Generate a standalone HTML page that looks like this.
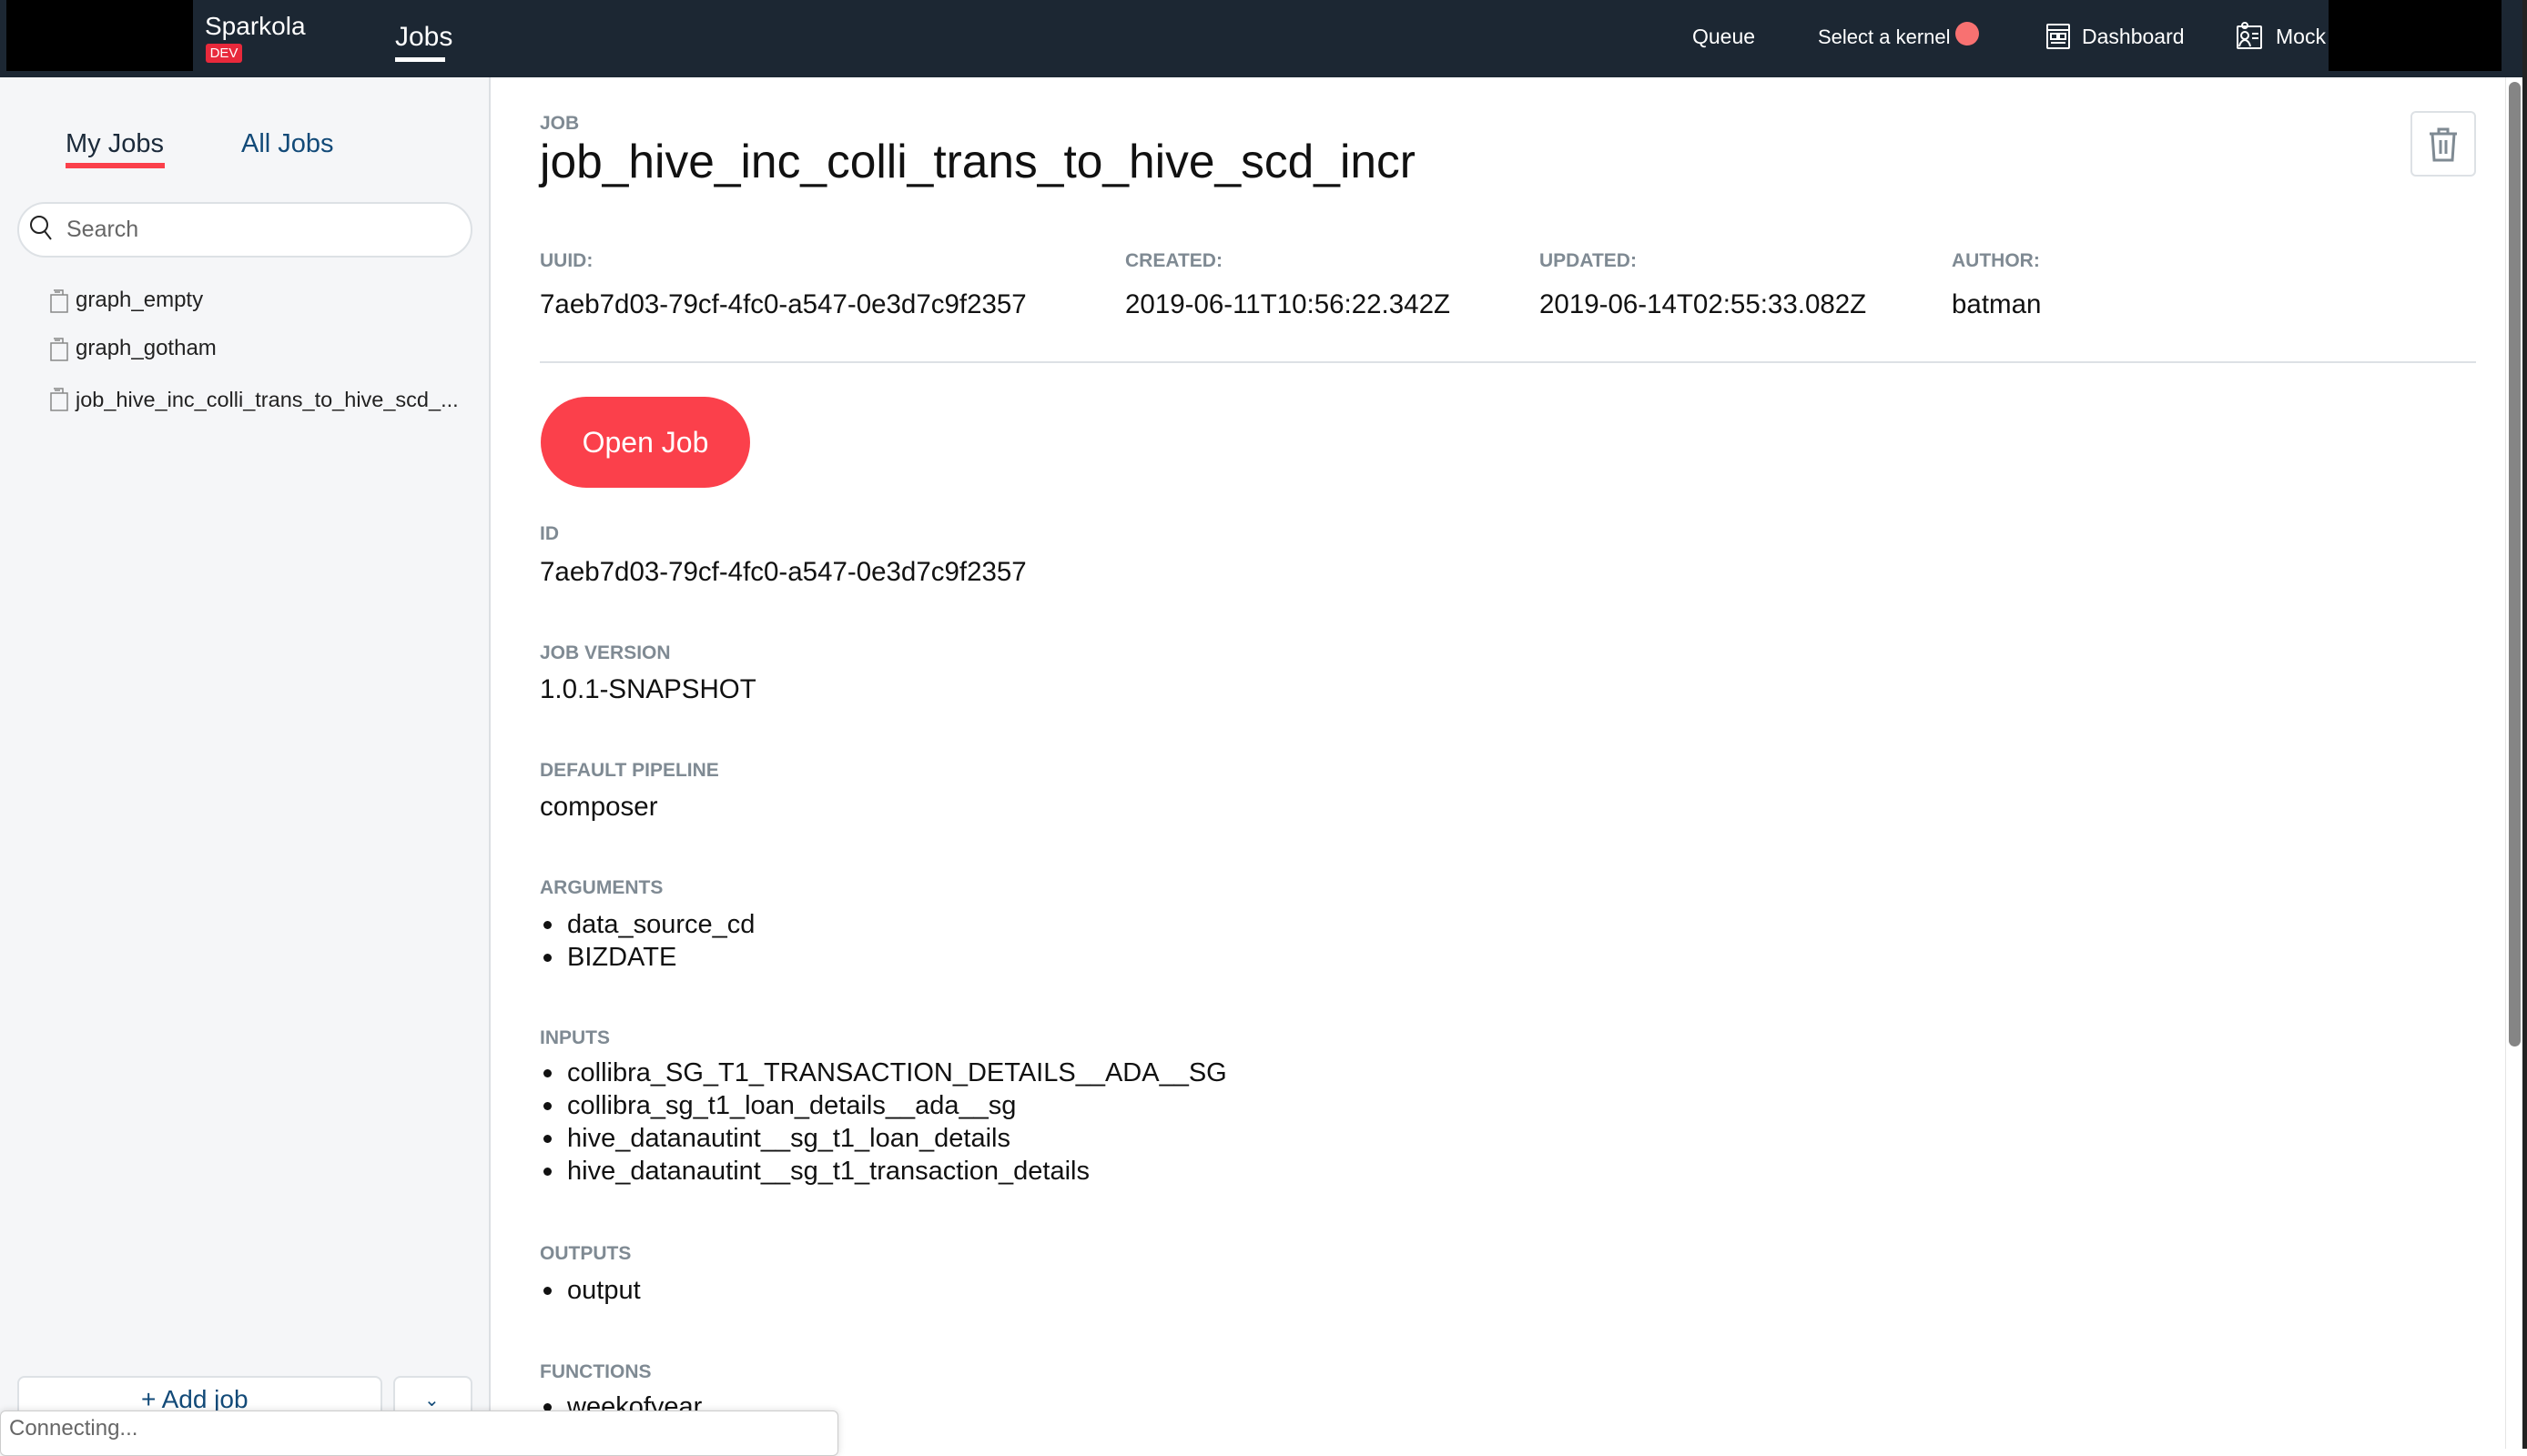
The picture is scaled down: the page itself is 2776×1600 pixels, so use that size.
<!DOCTYPE html>
<html><head><meta charset="utf-8"><style>
*{margin:0;padding:0;box-sizing:border-box}
body{width:2776px;height:1592px;overflow:hidden;background:#fff;font-family:"Liberation Sans",sans-serif;position:relative}
.a{position:absolute;white-space:nowrap;line-height:1.2}
.lbl{font-size:21px;font-weight:bold;color:#7f8a93}
.val{font-size:29.5px;color:#111}
.li{position:absolute;left:593px;font-size:29px;color:#111;white-space:nowrap;line-height:36px}
.li:before{content:"";position:absolute;left:4px;top:14px;width:9px;height:9px;border-radius:50%;background:#111}
.li span{margin-left:30px}
</style></head><body>
<!-- header -->
<div class="a" style="left:0;top:0;width:2776px;height:85px;background:#1c2733"></div>
<div class="a" style="left:7px;top:0;width:205px;height:78px;background:#000"></div>
<div class="a" style="left:2558px;top:0;width:190px;height:78px;background:#000"></div>
<div class="a" style="left:225px;top:12px;font-size:28px;color:#fff">Sparkola</div>
<div class="a" style="left:226px;top:48px;width:40px;height:21px;background:#e8293b;border-radius:3px;color:#fff;font-size:15px;text-align:center;line-height:21px">DEV</div>
<div class="a" style="left:434px;top:23px;font-size:30px;color:#fff">Jobs</div>
<div class="a" style="left:434px;top:63px;width:55px;height:5px;background:#fff"></div>
<div class="a" style="left:1859px;top:27px;font-size:23px;color:#fff">Queue</div>
<div class="a" style="left:1997px;top:28px;font-size:22px;color:#fff">Select a kernel</div>
<div class="a" style="left:2148px;top:24px;width:26px;height:26px;border-radius:50%;background:#f87171"></div>
<svg class="a" style="left:2248px;top:26px" width="26" height="28" viewBox="0 0 26 28" fill="none" stroke="#fff" stroke-width="2"><rect x="1" y="1" width="24" height="26" rx="1"/><line x1="1" y1="7" x2="25" y2="7"/><rect x="5" y="11" width="7" height="6"/><rect x="14" y="11" width="7" height="6"/><line x1="5" y1="21" x2="21" y2="21"/></svg>
<div class="a" style="left:2287px;top:27px;font-size:23px;color:#fff">Dashboard</div>
<svg class="a" style="left:2457px;top:24px" width="28" height="30" viewBox="0 0 28 30" fill="none" stroke="#fff" stroke-width="2"><rect x="1" y="5" width="26" height="24" rx="1"/><circle cx="9" cy="4" r="3"/><circle cx="9" cy="15" r="4"/><path d="M3 27c1-5 4-7 6-7s5 2 6 7"/><line x1="17" y1="13" x2="24" y2="13"/><line x1="17" y1="18" x2="24" y2="18"/></svg>
<div class="a" style="left:2500px;top:27px;font-size:23px;color:#fff">Mock</div>
<!-- sidebar -->
<div class="a" style="left:0;top:85px;width:539px;height:1507px;background:#f5f6f8;border-right:2px solid #dcdfe3"></div>
<div class="a" style="left:72px;top:141px;font-size:29px;color:#1b2a3a">My Jobs</div>
<div class="a" style="left:72px;top:179px;width:109px;height:6px;background:#fb404b"></div>
<div class="a" style="left:265px;top:141px;font-size:29px;color:#124a78">All Jobs</div>
<div class="a" style="left:19px;top:222px;width:500px;height:61px;background:#fff;border:2px solid #dde1e5;border-radius:31px"></div>
<svg class="a" style="left:32px;top:236px" width="28" height="30" viewBox="0 0 28 30" fill="none" stroke="#222" stroke-width="2"><circle cx="11" cy="11" r="9"/><line x1="17" y1="18" x2="24" y2="27"/></svg>
<div class="a" style="left:73px;top:237px;font-size:25px;color:#666">Search</div>
<svg class="a" style="left:55px;top:318px" width="20" height="26" viewBox="0 0 20 26" fill="none" stroke="#888" stroke-width="1.5"><path d="M1 6h18v19H1zM4 1h10v5M5 3h6"/></svg>
<div class="a" style="left:83px;top:316px;font-size:24px;color:#222">graph_empty</div>
<svg class="a" style="left:55px;top:371px" width="20" height="26" viewBox="0 0 20 26" fill="none" stroke="#888" stroke-width="1.5"><path d="M1 6h18v19H1zM4 1h10v5M5 3h6"/></svg>
<div class="a" style="left:83px;top:369px;font-size:24px;color:#222">graph_gotham</div>
<svg class="a" style="left:55px;top:426px" width="20" height="26" viewBox="0 0 20 26" fill="none" stroke="#888" stroke-width="1.5"><path d="M1 6h18v19H1zM4 1h10v5M5 3h6"/></svg>
<div class="a" style="left:83px;top:425px;font-size:23.5px;color:#222">job_hive_inc_colli_trans_to_hive_scd_...</div>
<div class="a" style="left:19px;top:1512px;width:401px;height:80px;background:#fff;border:2px solid #dde1e5;border-radius:8px"></div>
<div class="a" style="left:155px;top:1521px;font-size:28px;color:#124a78">+ Add job</div>
<div class="a" style="left:432px;top:1512px;width:87px;height:80px;background:#fff;border:2px solid #dde1e5;border-radius:8px"></div>
<div class="a" style="left:466px;top:1527px;font-size:20px;color:#124a78">&#8964;</div>
<!-- main -->
<div class="a lbl" style="left:593px;top:123px">JOB</div>
<div class="a" style="left:593px;top:147px;font-size:51.5px;color:#111">job_hive_inc_colli_trans_to_hive_scd_incr</div>
<div class="a" style="left:2648px;top:122px;width:72px;height:72px;border:2px solid #dde1e5;border-radius:6px"></div>
<svg class="a" style="left:2668px;top:140px" width="32" height="38" viewBox="0 0 32 38" fill="none" stroke="#7f8a93" stroke-width="3"><path d="M1 7h30M11 7V2h10v5M4 7l2 29h20l2-29M13 14v15M19 14v15"/></svg>
<div class="a lbl" style="left:593px;top:274px">UUID:</div>
<div class="a lbl" style="left:1236px;top:274px">CREATED:</div>
<div class="a lbl" style="left:1691px;top:274px">UPDATED:</div>
<div class="a lbl" style="left:2144px;top:274px">AUTHOR:</div>
<div class="a val" style="left:593px;top:317px">7aeb7d03-79cf-4fc0-a547-0e3d7c9f2357</div>
<div class="a val" style="left:1236px;top:317px">2019-06-11T10:56:22.342Z</div>
<div class="a val" style="left:1691px;top:317px">2019-06-14T02:55:33.082Z</div>
<div class="a val" style="left:2144px;top:317px">batman</div>
<div class="a" style="left:593px;top:397px;width:2127px;height:2px;background:#dde1e5"></div>
<div class="a" style="left:594px;top:436px;width:230px;height:100px;border-radius:50px;background:#fb404b;color:#fff;font-size:32px;text-align:center;line-height:100px">Open Job</div>
<div class="a lbl" style="left:593px;top:574px">ID</div>
<div class="a val" style="left:593px;top:611px">7aeb7d03-79cf-4fc0-a547-0e3d7c9f2357</div>
<div class="a lbl" style="left:593px;top:705px">JOB VERSION</div>
<div class="a val" style="left:593px;top:740px">1.0.1-SNAPSHOT</div>
<div class="a lbl" style="left:593px;top:834px">DEFAULT PIPELINE</div>
<div class="a val" style="left:593px;top:869px">composer</div>
<div class="a lbl" style="left:593px;top:963px">ARGUMENTS</div>
<div class="li" style="top:998px"><span>data_source_cd</span></div>
<div class="li" style="top:1034px"><span>BIZDATE</span></div>
<div class="a lbl" style="left:593px;top:1128px">INPUTS</div>
<div class="li" style="top:1161px"><span>collibra_SG_T1_TRANSACTION_DETAILS__ADA__SG</span></div>
<div class="li" style="top:1197px"><span>collibra_sg_t1_loan_details__ada__sg</span></div>
<div class="li" style="top:1233px"><span>hive_datanautint__sg_t1_loan_details</span></div>
<div class="li" style="top:1269px"><span>hive_datanautint__sg_t1_transaction_details</span></div>
<div class="a lbl" style="left:593px;top:1365px">OUTPUTS</div>
<div class="li" style="top:1400px"><span>output</span></div>
<div class="a lbl" style="left:593px;top:1495px">FUNCTIONS</div>
<div class="li" style="top:1528px"><span>weekofyear</span></div>
<!-- connecting bar -->
<div class="a" style="left:0;top:1550px;width:921px;height:50px;background:#fff;border:1px solid #ccc;border-radius:6px;box-shadow:0 0 8px rgba(0,0,0,.15)"></div>
<div class="a" style="left:10px;top:1556px;font-size:24px;color:#666">Connecting...</div>
<!-- scrollbar -->
<div class="a" style="left:2752px;top:85px;width:24px;height:1507px;background:#fff;border-left:1px solid #e5e5e5"></div>
<div class="a" style="left:2756px;top:90px;width:13px;height:1060px;background:#858585;border-radius:7px"></div>
<div class="a" style="left:2771px;top:0;width:5px;height:1592px;background:#222"></div>
</body></html>
